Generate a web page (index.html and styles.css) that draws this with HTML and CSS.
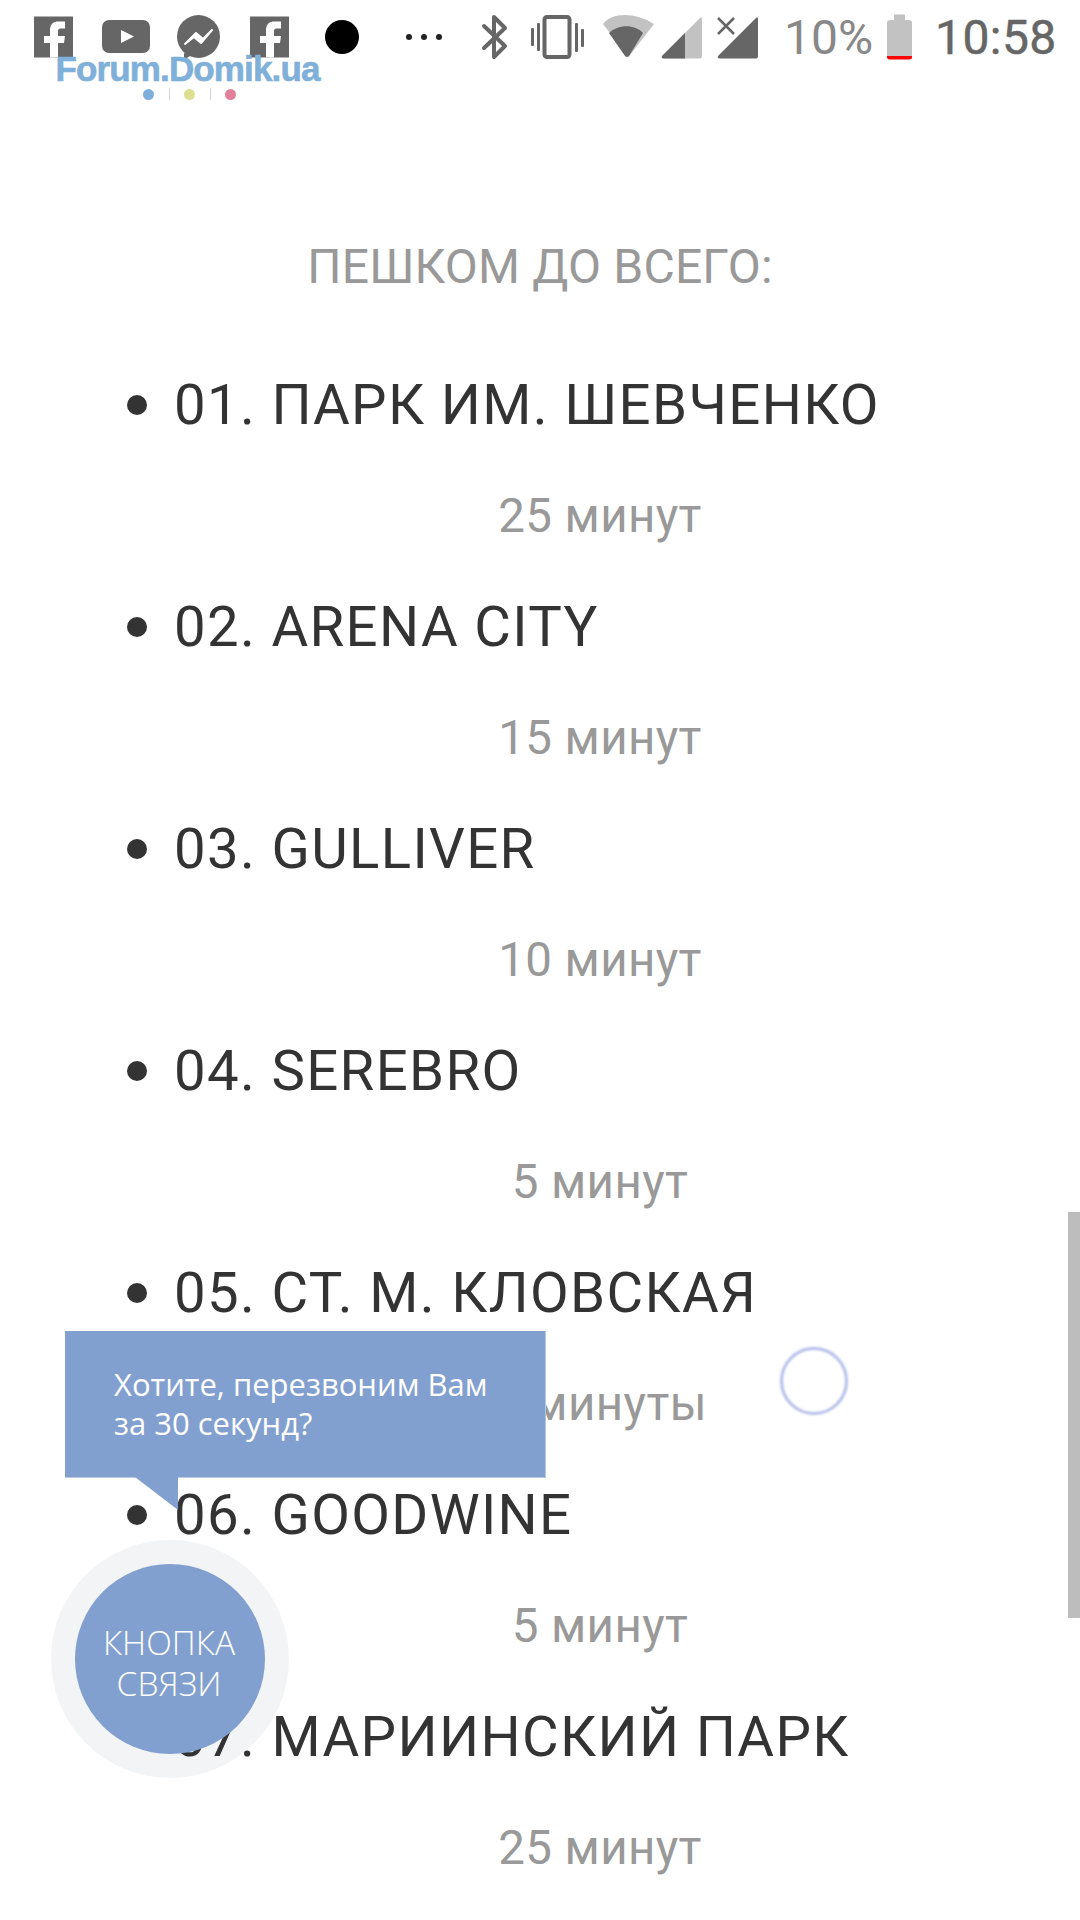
FILE: index.html
```html
<!DOCTYPE html>
<html lang="ru">
<head>
<meta charset="utf-8">
<title>Пешком до всего</title>
<link rel="stylesheet" href="styles.css">
</head>
<body>
<div class="page">
  <header class="status">
    <svg width="39" height="70" viewBox="0 0 39 70"><rect y="16.5" width="39" height="41" fill="#666"/><path d="M16 57.5V43H10V36H16V30C16 24 19.500 21.500 24.500 21.500H31V28.500H27C24.500 28.500 24 29.500 24 31.500V36H31L30 43H24V57.500Z" fill="#fff"/></svg>
    <svg width="77" height="70" viewBox="0 0 77 70"><rect x="29" y="20" width="48" height="33" rx="7" fill="#666"/><path d="M48 30V43L61 36.500Z" fill="#fff"/></svg>
    <svg width="70" height="70" viewBox="0 0 70 70"><circle cx="48.500" cy="36.500" r="21.500" fill="#666"/><path d="M34 53V59.500L42 55Z" fill="#666"/><path d="M35 44L46 33L53 39L62 30L51 43L44 37Z" fill="#fff" stroke="#fff" stroke-width="2" stroke-linejoin="round"/></svg>
    <svg width="69" height="70" viewBox="0 0 69 70"><rect x="30" y="16.500" width="39" height="41" fill="#666"/><path d="M46 57.500V43H40V36H46V30C46 24 49.500 21.500 54.500 21.500H61V28.500H57C54.500 28.500 54 29.500 54 31.500V36H61L60 43H54V57.500Z" fill="#fff"/></svg>
    <svg width="70" height="70" viewBox="0 0 70 70"><circle cx="53" cy="37" r="17" fill="#000"/></svg>
    <svg width="83" height="70" viewBox="0 0 83 70"><circle cx="50" cy="37" r="3" fill="#222"/><circle cx="65" cy="37" r="3" fill="#222"/><circle cx="80" cy="37" r="3" fill="#222"/></svg>
    <svg width="64" height="70" viewBox="0 0 64 70"><path d="M42 26L63 46L52 57V17L63 28L42 48" fill="none" stroke="#666" stroke-width="4" stroke-linecap="round" stroke-linejoin="round"/></svg>
    <svg width="78" height="70" viewBox="-1 0 78 70" fill="#666"><rect x="24" y="28" width="3" height="18" rx="1"/><rect x="30" y="23" width="3" height="28" rx="1"/><rect x="37.500" y="17" width="25" height="40" rx="2.500" fill="none" stroke="#666" stroke-width="4"/><rect x="68" y="23" width="3" height="29" rx="1"/><rect x="74" y="29" width="3" height="18" rx="1"/></svg>
    <svg width="71" height="70" viewBox="-1 0 71 70"><path d="M19 24C28 12 51 12 70 24L44.500 57Z" transform="translate(-1 0)" fill="#c2c2c2"/><path d="M24 33C33 24 50 24 58 33L44 56Q42 58 40 56Z" fill="#666"/></svg>
    <svg width="47" height="70" viewBox="2 0 47 70"><path d="M9 56L47 18Q49 16 49 19V56Q49 58.500 47 58.500H11Q8 58.500 9 56Z" fill="#c2c2c2"/><path d="M9 56L32 33V58.500H11Q8 58.500 9 56Z" fill="#666"/></svg>
    <svg width="56" height="70" viewBox="1 0 56 70"><path d="M17 56L55 18Q57 16 57 19V56Q57 58.500 55 58.500H19Q16 58.500 17 56Z" fill="#666"/><path d="M17 18L33 34M33 18L17 34" stroke="#666" stroke-width="2.500"/></svg>
    <span class="pct">10%</span>
    <svg width="39" height="70" viewBox="1 0 39 70"><path d="M22 14.500H33V20H37Q40 20 40 23V56H15V23Q15 20 18 20H22Z" fill="#c2c2c2"/><path d="M15 56H40V57Q40 59.500 37 59.500H18Q15 59.500 15 57Z" fill="#f00"/></svg>
    <span class="time">10:58</span>
  </header>

  <div class="logo">
    <span class="logo-name">Forum.Domik.ua</span>
    <span class="logo-dots"><i class="dot dot-blue"></i><i class="sep"></i><i class="dot dot-yellow"></i><i class="sep"></i><i class="dot dot-pink"></i></span>
  </div>

  <div class="ring"></div>

  <main class="content">
    <h2 class="title">ПЕШКОМ ДО ВСЕГО:</h2>
    <ul class="places">
      <li class="place"><h3 class="name">01. ПАРК ИМ. ШЕВЧЕНКО</h3><p class="walk">25 минут</p></li>
      <li class="place"><h3 class="name">02. ARENA CITY</h3><p class="walk">15 минут</p></li>
      <li class="place"><h3 class="name">03. GULLIVER</h3><p class="walk">10 минут</p></li>
      <li class="place"><h3 class="name">04. SEREBRO</h3><p class="walk">5 минут</p></li>
      <li class="place"><h3 class="name">05. СТ. М. КЛОВСКАЯ</h3><p class="walk">2 минуты</p></li>
      <li class="place"><h3 class="name">06. GOODWINE</h3><p class="walk">5 минут</p></li>
      <li class="place"><h3 class="name">07. МАРИИНСКИЙ ПАРК</h3><p class="walk">25 минут</p></li>
    </ul>
  </main>

  <div class="loader"></div>
  <div class="scrollbar"></div>

  <div class="tip">Хотите, перезвоним Вам<br>за 30 секунд?</div>
  <button class="call">КНОПКА<br>СВЯЗИ</button>
</div>
</body>
</html>
```

FILE: styles.css
```css
* { box-sizing: border-box; }
html, body { margin: 0; padding: 0; background: #fff; }
.page {
  position: relative;
  width: 1080px;
  height: 1920px;
  overflow: hidden;
  font-family: Roboto, sans-serif;
}
.status {
  display: flex;
  align-items: flex-start;
  height: 70px;
  padding-left: 34px;
}
.status svg { display: block; flex: none; overflow: visible; }
.pct, .time {
  font-size: 48px;
  line-height: 70px;
  flex: none;
  height: 70px;
  margin-top: 3px;
}
.pct { color: #888; margin-left: 26px; }
.time {
  color: #666;
  font-weight: 400;
  -webkit-text-stroke: 0.5px #666;
  letter-spacing: 0.4px;
  margin-left: 23px;
}

.logo {
  position: absolute;
  left: 55px;
  top: 51px;
  width: 265px;
  display: flex;
  flex-direction: column;
  align-items: center;
}
.logo-name {
  font-family: "Liberation Sans", Arial, sans-serif;
  font-weight: 700;
  font-size: 35px;
  line-height: 36px;
  letter-spacing: -0.85px;
  color: #7fb0d9;
  -webkit-text-stroke: 0.6px #7fb0d9;
  white-space: nowrap;
}
.logo-dots {
  display: flex;
  align-items: center;
  gap: 14.5px;
  margin: 1px 0 0 4px;
}
.dot { width: 11px; height: 11px; border-radius: 50%; }
.dot-blue { background: #7fb0dc; }
.dot-yellow { background: #dcdf90; }
.dot-pink { background: #e0809c; }
.sep { width: 1px; height: 12px; background: #d5d5d5; }

.content {
  position: relative;
  z-index: 1;
  padding-top: 167px;
}
.title {
  margin: 0 0 75px;
  font-size: 48px;
  line-height: 60px;
  font-weight: 400;
  letter-spacing: 0.2px;
  color: #999;
  text-align: center;
}
.places { list-style: none; margin: 0; padding: 0; }
.place { margin-bottom: 46px; }
.name {
  display: flex;
  align-items: center;
  gap: 27px;
  margin: 0;
  padding-left: 127px;
  font-size: 56.3px;
  line-height: 66px;
  font-weight: 400;
  letter-spacing: 1.35px;
  color: #333;
}
.name::before {
  content: "";
  flex: none;
  width: 20px;
  height: 20px;
  border-radius: 50%;
  background: #333;
}
.walk {
  margin: 46px 0 0;
  padding: 0 55px 0 175px;
  font-size: 47.5px;
  line-height: 64px;
  letter-spacing: 0.4px;
  color: #999;
  text-align: center;
}

.ring {
  position: absolute;
  left: 51px;
  top: 1540px;
  width: 238px;
  height: 238px;
  border-radius: 50%;
  background: #f2f4f6;
}
.call {
  position: absolute;
  z-index: 3;
  left: 75px;
  top: 1564px;
  width: 190px;
  height: 190px;
  padding: 8px 2px 0 0;
  border: 0;
  border-radius: 50%;
  background: #82a0cf;
  color: #fff;
  font-family: "Open Sans", sans-serif;
  font-weight: 300;
  font-size: 33.5px;
  line-height: 41px;
  text-align: center;
}
.tip {
  position: absolute;
  z-index: 3;
  left: 65px;
  top: 1331px;
  width: 481px;
  height: 147px;
  padding: 34px 0 0 49px;
  background: #82a0cf;
  border: 1px solid #b8c9e4;
  border-width: 0 1px 1px 0;
  color: #fff;
  font-family: "Open Sans", sans-serif;
  font-size: 31px;
  line-height: 39px;
}
.tip::after {
  content: "";
  position: absolute;
  left: 70px;
  top: 100%;
  width: 43px;
  height: 33px;
  background: #82a0cf;
  clip-path: polygon(0 0, 100% 0, 100% 100%);
}
.loader {
  position: absolute;
  z-index: 2;
  left: 780px;
  top: 1347px;
  width: 68px;
  height: 68px;
  border-radius: 50%;
  border: 3px solid #b4bde9;
  filter: blur(1px);
}
.scrollbar {
  position: absolute;
  z-index: 2;
  right: 0;
  top: 1212px;
  width: 12px;
  height: 406px;
  background: #bdbdbd;
}
```
